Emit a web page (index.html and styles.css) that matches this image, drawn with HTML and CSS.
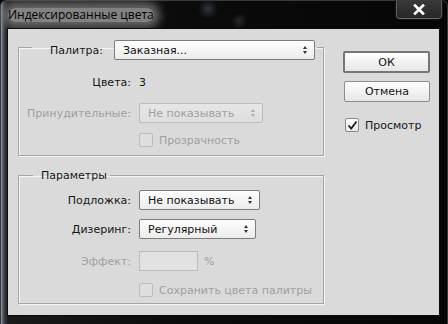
FILE: index.html
```html
<!DOCTYPE html>
<html lang="ru">
<head>
<meta charset="utf-8">
<title>Индексированные цвета</title>
<link rel="stylesheet" href="styles.css">
</head>
<body>
<div class="window">
  <div class="titlebar">
    <span class="title">Индексированные цвета</span>
    <div class="close">
      <svg width="14" height="11" viewBox="0 0 14 11"><path d="M3 1.5 L11 9.5 M11 1.5 L3 9.5" stroke="#fff" stroke-width="2.6" stroke-linecap="square"/></svg>
    </div>
  </div>
  <div class="client">
    <div class="main">
      <fieldset class="group palette">
        <legend class="legend-row">
          <span class="lbl">Палитра:</span>
          <div class="select palette-select"><span>Заказная...</span><i class="arrows"></i></div>
        </legend>
        <div class="row r-colors">
          <span class="label">Цвета:</span>
          <span class="value">3</span>
        </div>
        <div class="row r-forced">
          <span class="label disabled">Принудительные:</span>
          <div class="select disabled forced-select"><span>Не показывать</span><i class="arrows"></i></div>
        </div>
        <div class="row r-transp">
          <span class="label"></span>
          <span class="check disabled"></span><span class="ctext disabled">Прозрачность</span>
        </div>
      </fieldset>
      <fieldset class="group params">
        <legend class="legend-text">Параметры</legend>
        <div class="row r-matte">
          <span class="label">Подложка:</span>
          <div class="select matte-select"><span>Не показывать</span><i class="arrows"></i></div>
        </div>
        <div class="row r-dither">
          <span class="label">Дизеринг:</span>
          <div class="select dither-select"><span>Регулярный</span><i class="arrows"></i></div>
        </div>
        <div class="row r-amount">
          <span class="label disabled">Эффект:</span>
          <div class="input disabled"></div><span class="pct disabled">%</span>
        </div>
        <div class="row r-preserve">
          <span class="label"></span>
          <span class="check disabled"></span><span class="ctext disabled">Сохранить цвета палитры</span>
        </div>
      </fieldset>
    </div>
    <div class="side">
      <div class="btn default">ОК</div>
      <div class="btn">Отмена</div>
      <div class="preview">
        <span class="check checked">
          <svg width="11" height="11" viewBox="0 0 11 11"><path d="M1.5 5.5 L4.2 8.5 L9.5 1.5" fill="none" stroke="#1c1c1c" stroke-width="1.8"/></svg>
        </span>
        <span class="ctext">Просмотр</span>
      </div>
    </div>
  </div>
</div>
</body>
</html>
```

FILE: styles.css
```css
* { box-sizing: border-box; }
html, body { margin: 0; padding: 0; }
body {
  width: 448px;
  height: 324px;
  overflow: hidden;
  background: #000;
  font-family: "DejaVu Sans", Verdana, sans-serif;
  font-size: 11px;
  color: #161616;
}
.window {
  width: 448px;
  height: 324px;
  border-radius: 6px 6px 0 0;
  background:
    radial-gradient(circle 10px at 207px 8px, rgba(70,80,90,0.6) 0, rgba(0,0,0,0) 100%),
    radial-gradient(circle 8px at 238px 20px, rgba(60,70,80,0.5) 0, rgba(0,0,0,0) 100%),
    linear-gradient(to right, #8797aa 0, #3b4048 3px, #1a1a1a 7px, #0b0b0b 40%, #060606 100%);
  display: flex;
  flex-direction: column;
  border: 1px solid #3a3a3a;
  border-bottom: 0;
}
.titlebar {
  height: 27px;
  display: flex;
  align-items: flex-start;
  justify-content: space-between;
  padding-left: 7px;
}
.title {
  font-family: "Open Sans", "Noto Sans", sans-serif;
  font-size: 12px;
  line-height: 14px;
  margin-top: 7px;
  color: #000;
  background: rgba(150,150,150,0.85);
  border-radius: 8px;
  box-shadow: 0 0 8px 6px rgba(130,130,130,0.75);
}
.close {
  width: 48px;
  height: 20px;
  margin-right: 4px;
  margin-top: -1px;
  border: 1px solid #151515;
  border-top: 0;
  border-radius: 0 0 5px 5px;
  background: linear-gradient(#3a3a3a, #262626);
  box-shadow: inset 0 -1px 0 #6a6a6a, inset 1px 0 0 #5a5a5a, inset -1px 0 0 #5a5a5a;
  display: flex;
  align-items: center;
  justify-content: center;
}
.client {
  margin-left: 6px;
  width: 433px;
  height: 288px;
  border: 1px solid #0c0c0c;
  background: #dadada;
  display: flex;
  padding: 5px 0 0 10px;
}
.main {
  width: 306px;
  display: flex;
  flex-direction: column;
}
.group {
  margin: 0;
  padding: 0;
  border: 1px solid #a4a4a4;
  box-shadow: inset 1px 1px 0 #f4f4f4, 1px 1px 0 #f4f4f4;
  min-width: 0;
}
.legend-row {
  margin-left: 13px;
  padding: 6px 2px 0 18px;
  display: flex;
  align-items: center;
}
.lbl { margin-right: 11px; }
.legend-text {
  margin-left: 14px;
  padding: 0 3px 0 8px;
  line-height: 13px;
}
.palette { height: 122px; }
.params { margin-top: 13px; height: 135px; }
.row {
  display: flex;
  align-items: center;
  height: 20px;
}
.label {
  width: 112px;
  text-align: right;
  margin-right: 8px;
  flex: none;
}
.disabled { color: #a0a0a0; }
.r-colors { margin-top: 12px; }
.r-forced { margin-top: 11px; }
.r-transp { margin-top: 7px; }
.r-matte { margin-top: 8px; }
.r-dither { margin-top: 9px; }
.r-amount { margin-top: 12px; }
.r-preserve { margin-top: 9px; }
.select {
  position: relative;
  height: 20px;
  border: 1px solid #7c7c7c;
  border-radius: 2px;
  background: linear-gradient(#fdfdfd, #ececec);
  padding-left: 8px;
  display: flex;
  align-items: center;
  color: #111;
}
.select.disabled {
  border-color: #bdbdbd;
  background: linear-gradient(#e6e6e6, #dedede);
  color: #a0a0a0;
}
.palette-select { width: 201px; }
.forced-select { width: 124px; }
.matte-select { width: 121px; }
.dither-select { width: 117px; }
.arrows {
  position: absolute;
  right: 6px;
  top: 5px;
  width: 5px;
  height: 8px;
}
.arrows::before, .arrows::after {
  content: "";
  position: absolute;
  left: 0;
  border-left: 2.5px solid transparent;
  border-right: 2.5px solid transparent;
}
.arrows::before { top: 0; border-bottom: 3px solid #333; }
.arrows::after { bottom: 0; border-top: 3px solid #333; }
.disabled .arrows::before { border-bottom-color: #aaa; }
.disabled .arrows::after { border-top-color: #aaa; }
.input {
  width: 59px;
  height: 20px;
  border: 1px solid #bdbdbd;
  background: #e2e2e2;
}
.pct { margin-left: 6px; }
.check {
  width: 14px;
  height: 14px;
  border: 1px solid #8a8a8a;
  border-radius: 2px;
  background: linear-gradient(#fdfdfd, #e9e9e9);
  flex: none;
  display: flex;
  align-items: center;
  justify-content: center;
}
.check.disabled {
  border-color: #bcbcbc;
  background: #dedede;
}
.ctext { margin-left: 6px; }
.side {
  margin-left: 19px;
  width: 87px;
  display: flex;
  flex-direction: column;
  padding-top: 17px;
}
.btn {
  height: 21px;
  border: 1px solid #8d8d8d;
  border-radius: 2px;
  background: linear-gradient(#fefefe, #e6e6e6);
  display: flex;
  align-items: center;
  justify-content: center;
  color: #111;
}
.btn.default {
  border: 2px solid #767676;
  height: 22px;
}
.btn + .btn { margin-top: 8px; margin-left: 1px; }
.preview {
  margin-top: 16px;
  margin-left: 2px;
  display: flex;
  align-items: center;
}
.preview .ctext { margin-left: 6px; }
```
